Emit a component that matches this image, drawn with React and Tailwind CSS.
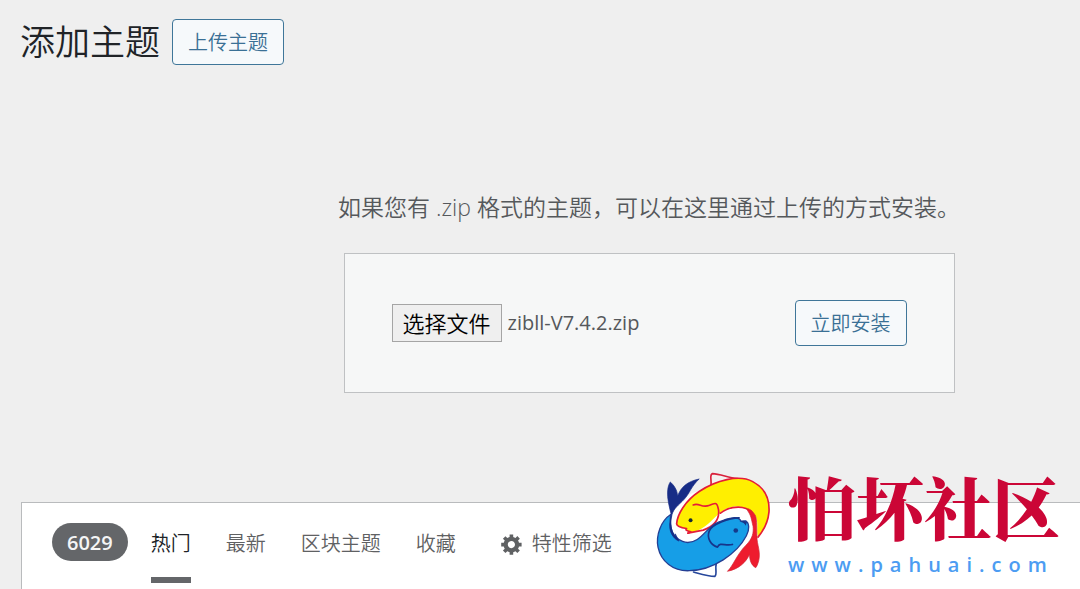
import React, { useState } from "react";

const tabs = ["热门", "最新", "区块主题", "收藏"];

const buttonClass =
  "flex shrink-0 items-center justify-center rounded-sm border border-[#3f7699] bg-[#f6f9fb] px-[15px] pt-[9px] pb-[7px] text-[20px] leading-7 text-[#3a7095]";

function GearIcon() {
  return (
    <svg viewBox="0 0 20 20" className="size-6 shrink-0" fill="currentColor" aria-hidden="true">
      <path d="M18 12h-2.180c-.170.700-.440 1.350-.810 1.930l1.540 1.540-2.100 2.100-1.540-1.540c-.580.360-1.230.630-1.910.790V19H8v-2.180c-.680-.160-1.330-.430-1.910-.790l-1.540 1.540-2.120-2.120 1.540-1.540c-.360-.580-.630-1.230-.790-1.910H1V9.030h2.170c.160-.700.440-1.350.800-1.940L2.430 5.550l2.100-2.100 1.540 1.540c.580-.370 1.240-.640 1.930-.810V2h3v2.180c.680.160 1.330.430 1.910.790l1.540-1.540 2.120 2.120-1.540 1.540c.360.590.640 1.240.800 1.940H18V12zm-8.500 1.500c1.660 0 3-1.340 3-3s-1.340-3-3-3-3 1.340-3 3 1.340 3 3 3z" />
    </svg>
  );
}

function FishLogo() {
  return (
    <svg viewBox="30 30 350 325" className="h-[108px] w-[117px] shrink-0" aria-hidden="true">
      <g strokeLinecap="round" strokeLinejoin="round">
        {/* white gap between the two fish */}
        <path
          d="M76 161 C90 125 130 95 163 91 L330 150 L336 229 L304 225 L200 300 L76 240 Z"
          fill="#fff"
        />
        {/* yellow fish */}
        <path
          d="M197 74 C201 61 191 41 202 38 C226 39 248 50 277 53"
          fill="#f4f0ef"
          stroke="#d9203b"
          strokeWidth="5"
        />
        <path
          d="M128 217 L137 213 C122 210 119 205 124 203 C111 201 95 198 94 189 C96 161 119 120 163 91 C211 59 281 39 323 62 C363 83 374 119 372 153 C369 187 354 211 339 229 C333 205 341 188 333 169 C322 149 295 134 268 137 C242 140 226 153 205 174 C183 196 161 214 128 217 Z"
          fill="#ffef00"
        />
        <path
          d="M128 217 L137 213 C122 210 119 205 124 203 C111 201 95 198 94 189 C96 161 119 120 163 91 C211 59 281 39 323 62 C363 83 374 119 372 153 C369 187 354 211 339 229"
          fill="none"
          stroke="#e51c38"
          strokeWidth="5"
        />
        <path
          d="M144 132 C163 124 169 143 193 133 C213 124 216 125 220 146 C224 176 205 197 174 208 L128 217 M226 157 C245 141 279 133 303 143"
          fill="none"
          stroke="#e51c38"
          strokeWidth="5"
        />
        <circle cx="136" cy="178" r="6" fill="#162a35" />
        {/* red tail */}
        <path
          d="M303 143 C314 143 322 149 331 164 C337 179 334 205 336 229 C335 249 348 273 341 300 C338 311 335 318 332 321 C318 313 314 298 313 281 C303 305 281 325 247 332 C264 315 276 280 302 254 C323 233 326 216 324 196 C318 174 320 164 303 143 Z"
          fill="#ee1c2e"
          stroke="#cf2434"
          strokeWidth="2"
        />
        {/* blue fish */}
        <path
          d="M145 334 C167 340 188 347 209 347 C217 340 209 323 213 311"
          fill="#fff"
          stroke="#26469b"
          strokeWidth="5"
        />
        <path
          d="M76 161 C47 180 31 223 38 259 C47 302 83 332 132 330 C203 329 276 279 304 225 C314 206 313 187 302 180 L288 181 C281 165 253 169 220 184 C190 197 178 222 156 236 C140 246 124 247 112 242 C88 233 70 213 76 161 Z"
          fill="#169ee7"
          stroke="#243f94"
          strokeWidth="4"
        />
        <path
          d="M282 171 C252 171 199 191 192 211 C184 232 197 253 217 259 C225 242 240 257 262 251"
          fill="none"
          stroke="#17358a"
          strokeWidth="5"
        />
        <path d="M283 182 C294 184 299 188 302 195 L305 184 L297 180 Z" fill="#17358a" />
        <circle cx="272" cy="209" r="7" fill="#153a8b" />
        {/* navy tail */}
        <path
          d="M78 162 C72 139 65 112 67 90 C68 77 71 69 75 63 C85 72 96 86 97 105 C108 77 126 62 162 54 C139 74 133 98 116 116 C101 132 85 142 80 162 C74 186 76 212 91 228 L90 219 L101 241 C82 233 72 212 73 191 Z"
          fill="#172c86"
          stroke="#172c86"
          strokeWidth="2"
        />
      </g>
    </svg>
  );
}

function Watermark() {
  return (
    <div className="absolute right-5 bottom-2.5 flex items-end gap-4">
      <FishLogo />
      <div className="flex flex-col">
        <p className="font-['Liberation_Serif','Noto_Serif_CJK_SC','Noto_Sans_CJK_SC',serif] text-[68px] leading-[78px] font-black text-[#cb0636]">
          怕坏社区
        </p>
        <p className="text-[20px] leading-7 font-semibold tracking-[7px] text-[#4c9cf2]">www.pahuai.com</p>
      </div>
    </div>
  );
}

function UploadForm() {
  const [fileName, setFileName] = useState("zibll-V7.4.2.zip");

  return (
    <section className="flex flex-col items-center pl-[218px] text-[#55585b]">
      <p className="text-[23px] leading-7 whitespace-nowrap">
        如果您有 .zip 格式的主题，可以在这里通过上传的方式安装。
      </p>
      <form
        className="relative mt-8 flex w-full max-w-[611px] items-center justify-between border border-[#bfc1c3] bg-[#f6f7f7] px-[47px] py-[46px]"
        onSubmit={(e) => e.preventDefault()}
      >
        <div className="flex items-center gap-1.5">
          <input
            id="themezip"
            type="file"
            accept=".zip"
            className="sr-only"
            onChange={(e) => e.target.files[0] && setFileName(e.target.files[0].name)}
          />
          <label
            htmlFor="themezip"
            className="border border-[#a5a5a5] bg-[#efefef] px-2.5 py-0.5 text-[22px] leading-8 text-black"
          >
            选择文件
          </label>
          <span className="text-[20px] leading-8 font-normal">{fileName}</span>
        </div>
        <button type="submit" className={buttonClass}>
          立即安装
        </button>
      </form>
    </section>
  );
}

export default function App() {
  const [active, setActive] = useState("热门");

  return (
    <div className="relative flex min-h-screen flex-col overflow-hidden bg-[#efefef] font-['Open_Sans','Noto_Sans_CJK_SC',sans-serif] font-[350]">
      <header className="flex items-center gap-3 px-5 pt-[19px]">
        <h1 className="text-[35px] leading-[46px] text-[#202327]">添加主题</h1>
        <button type="button" className={buttonClass}>
          上传主题
        </button>
      </header>

      <main className="flex flex-1 flex-col pt-32">
        <UploadForm />

        <div className="mt-[109px] ml-[21px] flex flex-1 items-start border-t border-l border-[#b9bbbd] bg-white pl-[30px] text-[20px] text-[#5f6163]">
          <span className="mt-5 rounded-full bg-[#646669] px-[15px] pt-1.5 pb-1 leading-7 font-semibold text-[#f4f5f6]">
            6029
          </span>
          <nav className="ml-[23px] flex gap-[35px]">
            {tabs.map((tab) => (
              <a
                key={tab}
                href="#themes"
                onClick={() => setActive(tab)}
                className={`border-b-[6px] pt-[27px] pb-[19px] leading-7 ${
                  active === tab ? "border-[#646669] text-[#202327]" : "border-transparent"
                }`}
              >
                {tab}
              </a>
            ))}
          </nav>
          <button type="button" className="ml-11 flex items-center gap-2 pt-[27px] leading-7">
            <GearIcon />
            特性筛选
          </button>
        </div>
      </main>

      <Watermark />
    </div>
  );
}
